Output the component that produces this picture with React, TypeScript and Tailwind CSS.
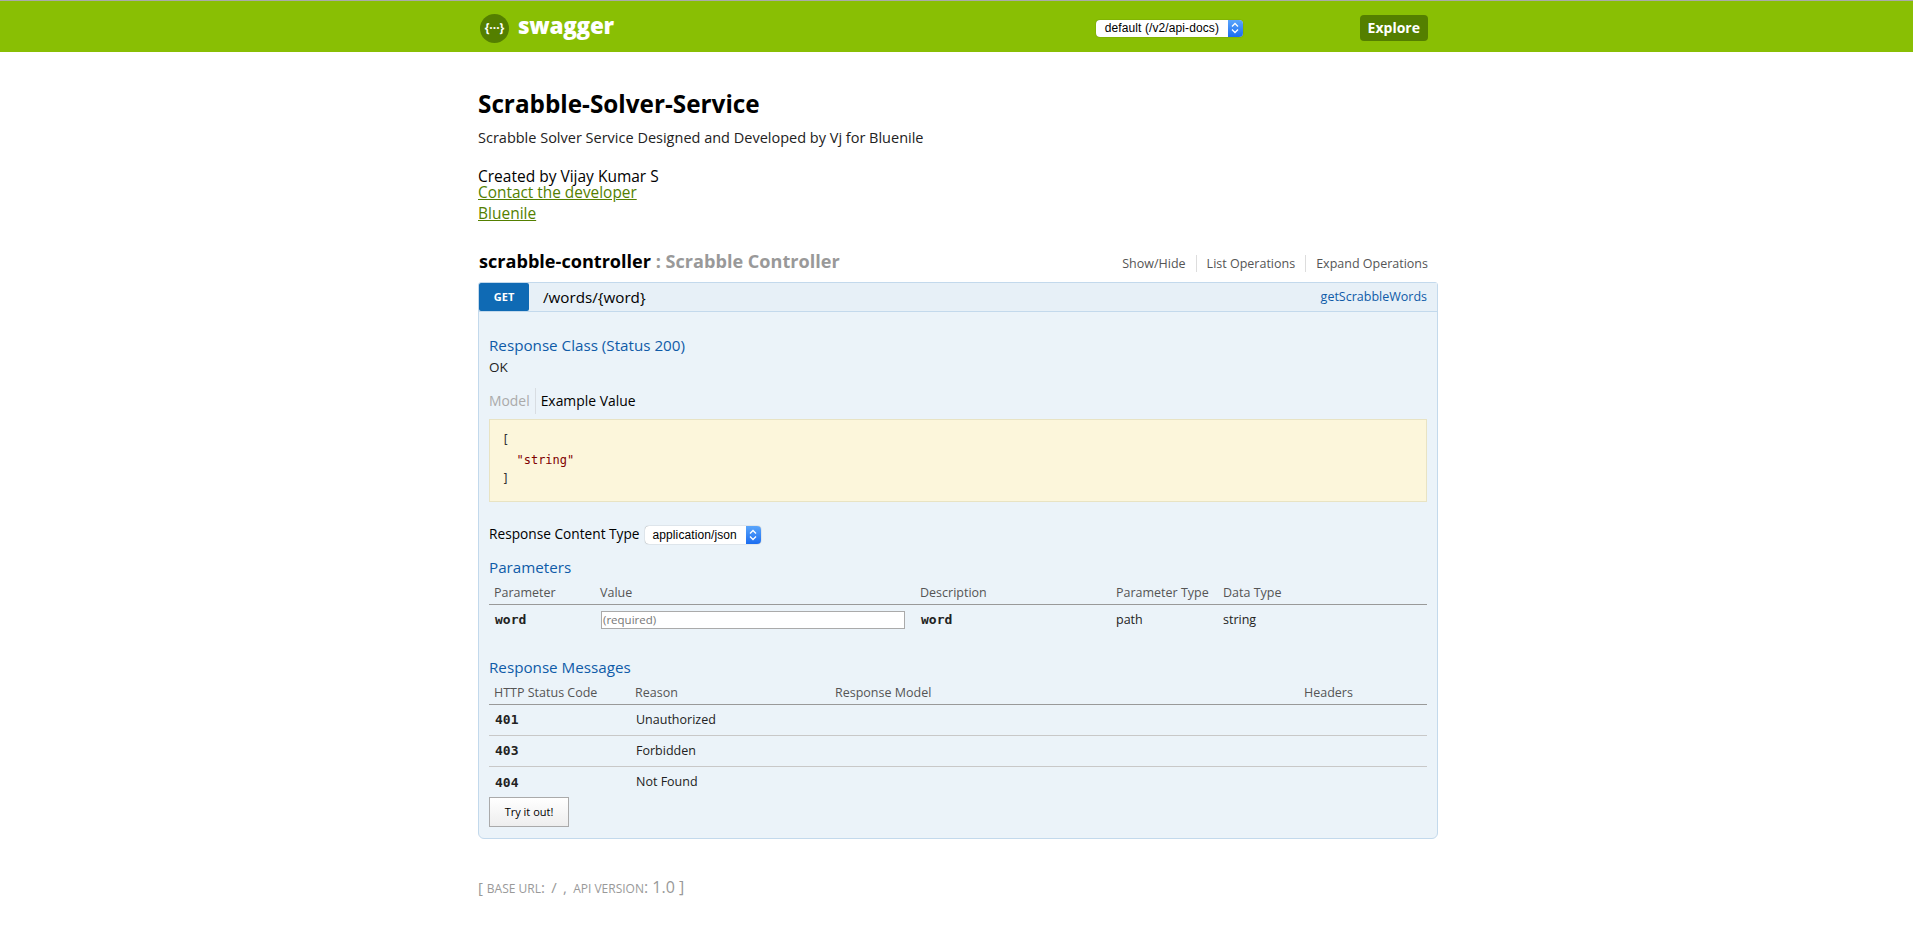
import React from "react";

const sans = "font-['Open_Sans','Noto_Sans',sans-serif]";
const helv = "font-['Liberation_Sans',Arial,sans-serif]";
const mono = "font-['DejaVu_Sans_Mono','Liberation_Mono',monospace]";

const SelectArrows = () => (
  <svg width="8" height="12" viewBox="0 0 8 12" fill="none" stroke="white" strokeWidth="1.3">
    <path d="M1 4.5 L4 1.5 L7 4.5" />
    <path d="M1 7.5 L4 10.5 L7 7.5" />
  </svg>
);

const FakeSelect: React.FC<{ label: string; className: string; textClass: string }> = ({ label, className, textClass }) => (
  <div className={`flex items-stretch rounded-[4px] bg-white shadow-[0_0_1px_rgba(0,0,0,0.55)] overflow-hidden ${className}`}>
    <span className={`flex-1 text-[12px] leading-none flex items-center text-black tracking-[0.1px] ${helv} ${textClass}`}>{label}</span>
    <span className="w-[15px] flex items-center justify-center bg-gradient-to-b from-[#5aa5fb] to-[#1a6cf0]">
      <SelectArrows />
    </span>
  </div>
);

const SubTitle: React.FC<{ children: React.ReactNode; className?: string }> = ({ children, className }) => (
  <h4 className={`text-[15.2px] leading-[20px] text-[#0f5ba8] ${className ?? ""}`}>{children}</h4>
);

const responses = [
  { code: "401", reason: "Unauthorized" },
  { code: "403", reason: "Forbidden" },
  { code: "404", reason: "Not Found" },
];

export default function App() {
  return (
    <div className={`min-h-[949px] bg-white ${sans}`}>
      {/* Header */}
      <header className="h-[52px] bg-[#89bf04] border-t border-[#aaaaaa]">
        <div className="w-[963px] pl-[3px] mx-auto flex items-center h-full">
          <div className="w-[29px] h-[29px] ml-[2px] mt-[3px] rounded-full bg-[#547f00] flex items-center justify-center text-white text-[12px] font-bold leading-none">
            {"{···}"}
          </div>
          <span className="ml-[9px] text-white text-[22.5px] font-extrabold leading-none tracking-[-0.3px] mb-[1px]">swagger</span>
          <FakeSelect label="default (/v2/api-docs)" className="w-[147px] h-[17px] ml-[482px] mt-[3px]" textClass="pl-[9px]" />
          <div className="ml-[117px] w-[68px] h-[26px] mt-[2px] rounded-[4px] bg-[#547f00] flex items-center justify-center text-white text-[14px] font-bold">
            Explore
          </div>
        </div>
      </header>

      <main className="w-[963px] pl-[3px] mx-auto">
        {/* Info */}
        <section className="pt-[34px]">
          <h1 className="text-[24.3px] leading-[36px] font-bold text-black">Scrabble-Solver-Service</h1>
          <p className="mt-[6px] text-[14.5px] leading-[20px] text-[#222222]">
            Scrabble Solver Service Designed and Developed by Vj for Bluenile
          </p>
          <div className="mt-[20px] text-[15.5px] leading-[16px] text-black">Created by Vijay Kumar S</div>
          <a className="block text-[15.4px] leading-[17px] text-[#547f00] underline">Contact the developer</a>
          <a className="block mt-[4px] text-[15.5px] leading-[17px] text-[#547f00] underline">Bluenile</a>
        </section>

        {/* Resource heading */}
        <div className="mt-[26px] flex items-center justify-between h-[26px] pl-[1px]">
          <h2 className="text-[18.1px] font-bold leading-[26px] text-black">
            scrabble-controller <span className="text-[#999999]">: Scrabble Controller</span>
          </h2>
          <ul className="flex items-center text-[12.5px] leading-[17px] text-[#555555] mr-[10px] mt-[4px]">
            <li className="pr-[10px] border-r border-[#dddddd]">Show/Hide</li>
            <li className="px-[10px] border-r border-[#dddddd]">List Operations</li>
            <li className="pl-[10px]">Expand Operations</li>
          </ul>
        </div>

        {/* Operation */}
        <section className="mt-[8px] rounded-b-[6px] rounded-t-[3px] border border-[#c3d9ec] bg-[#ebf3f9]">
          <div className="flex items-center h-[29px] bg-[#e7f0f7] border-b border-[#c3d9ec]">
            <span className="w-[50px] h-[28px] bg-[#0f6ab4] rounded-[2px] flex items-center justify-center text-white text-[11px] font-bold">GET</span>
            <span className="ml-[14px] text-[15.2px] text-black flex-1">/words/{"{word}"}</span>
            <span className="mr-[10px] text-[12.5px] text-[#0f5ba8]">getScrabbleWords</span>
          </div>

          <div className="px-[10px] pt-[23px] pb-[11px]">
            <SubTitle>Response Class (Status 200)</SubTitle>
            <div className="mt-[2px] text-[13.5px] leading-[20px] text-[#222222]">OK</div>

            <div className="mt-[11px] flex items-center h-[26px] text-[13.9px]">
              <span className="pr-[5px] h-full flex items-center border-r border-[#d8dde2] text-[#aaaaaa]">Model</span>
              <span className="pl-[5px] text-black">Example Value</span>
            </div>

            <pre className={`mt-[5px] h-[83px] border border-[#e8e3c3] bg-[#fcf6db] pl-[12px] pt-[11px] text-[12px] leading-[19.5px] text-[#333333] ${mono}`}>
              [{"\n"}  <span className="text-[#800000]">"string"</span>{"\n"}]
            </pre>

            <div className="mt-[22px] flex items-center h-[20px]">
              <span className="text-[13.7px] text-black">Response Content Type</span>
              <FakeSelect label="application/json" className="w-[116px] h-[18px] ml-[5px] mt-[1px]" textClass="pl-[8px]" />
            </div>

            <SubTitle className="mt-[13px]">Parameters</SubTitle>
            <div className="mt-[5px] grid grid-cols-[106px_320px_196px_107px_1fr] pl-[5px] h-[23px] items-center border-b border-[#999999] text-[12.5px] text-[#555555]">
              <span>Parameter</span>
              <span>Value</span>
              <span>Description</span>
              <span>Parameter Type</span>
              <span>Data Type</span>
            </div>
            <div className="grid grid-cols-[106px_320px_196px_107px_1fr] pl-[5px] h-[30px] items-center text-[12.5px] text-[#222222]">
              <span className={`text-[13px] font-bold pl-[1px] ${mono}`}>word</span>
              <div className="w-[304px] h-[18px] bg-white border border-[#aaaaaa] flex items-center pl-[1px] translate-x-[1px] text-[11.5px] text-[#777777]">(required)</div>
              <span className={`text-[13px] font-bold pl-[1px] ${mono}`}>word</span>
              <span>path</span>
              <span>string</span>
            </div>

            <SubTitle className="mt-[22px]">Response Messages</SubTitle>
            <div className="mt-[5px] grid grid-cols-[141px_200px_469px_1fr] pl-[5px] h-[23px] items-center border-b border-[#999999] text-[12.5px] text-[#555555]">
              <span>HTTP Status Code</span>
              <span>Reason</span>
              <span>Response Model</span>
              <span>Headers</span>
            </div>
            {responses.map((r, i) => (
              <div
                key={r.code}
                className={`grid grid-cols-[141px_200px_469px_1fr] pl-[5px] h-[31px] items-center text-[12.5px] text-[#222222] ${i < 2 ? "border-b border-[#c8c8c8]" : ""}`}
              >
                <span className={`text-[13px] font-bold pl-[1px] ${mono}`}>{r.code}</span>
                <span className="pl-[1px]">{r.reason}</span>
              </div>
            ))}

            <button className="block -mt-[1px] w-[80px] h-[30px] border border-[#aaaaaa] bg-gradient-to-b from-[#ffffff] to-[#eeeeee] text-[11px] text-black">
              Try it out!
            </button>
          </div>
        </section>

        {/* Footer */}
        <footer className="mt-[36px] h-[26px] flex items-baseline text-[#999999] text-[12px]">
          <span className="text-[15px]">[&nbsp;</span>
          <span className="uppercase">Base URL</span>
          <span className="text-[15px] tracking-[1.2px]">:&nbsp;/&nbsp;,&nbsp;</span>
          <span className="uppercase">API Version</span>
          <span className="text-[16px]">:&nbsp;1.0&nbsp;]</span>
        </footer>
      </main>
    </div>
  );
}
